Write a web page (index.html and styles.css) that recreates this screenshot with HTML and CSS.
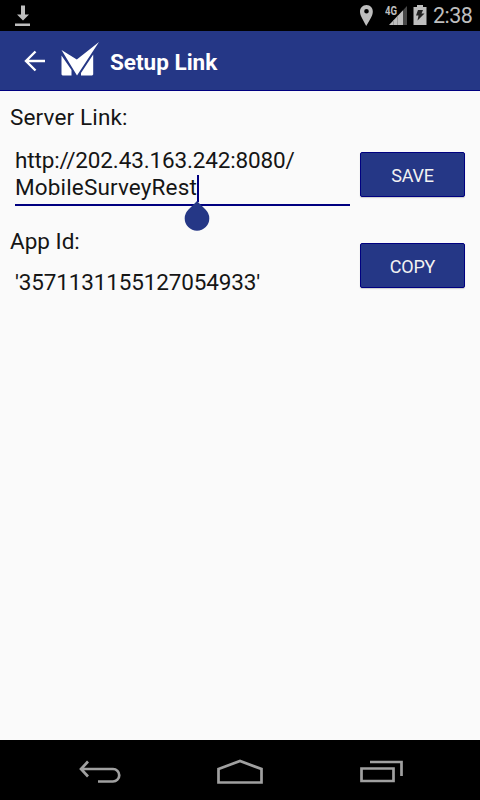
FILE: index.html
```html
<!DOCTYPE html>
<html lang="en">
<head>
  <meta charset="UTF-8">
  <title>Setup Link</title>
  <link rel="stylesheet" href="styles.css">
</head>
<body>
  <div class="status-bar">
    <svg class="download" width="16" height="21" viewBox="0 0 16 21">
      <path fill="#bebebe" d="M6 0.500h4v9h4l-6 6-6-6h4zM0 18.500h15v2.500H0z"/>
    </svg>
    <div class="status-right">
      <svg class="pin" width="14" height="21" viewBox="0 0 14 21">
        <path fill="#bebebe" fill-rule="evenodd" d="M6.500 0C2.500 0 0 3 0 6.700C0 11 3.500 15 6.200 21C9.500 15 12.800 11 12.800 6.700C12.800 3 10.500 0 6.500 0zM6.500 4a2.300 2.300 0 1 1 0 4.600a2.300 2.300 0 0 1 0-4.600z"/>
      </svg>
      <div class="network">
        <span class="network-type">4G</span>
        <svg width="18" height="20" viewBox="0 0 18 20">
          <path fill="#bebebe" d="M0 20L14 5.200V20z"/>
          <path fill="#999" d="M4 15.800l1-1V20H4zM8 11.500l1-1V20H8z"/>
          <path fill="#484848" d="M14 5.200L18 1v19h-4z"/>
        </svg>
      </div>
      <svg class="battery" width="14" height="20" viewBox="0 0 14 20">
        <path fill="#bebebe" d="M4 0h6v2h3.500v18H.5V2H4z"/>
        <path fill="#222" d="M5 5h5l-1.500 3.500h3L4.500 15.500l1-5H3z"/>
      </svg>
      <span class="clock">2:38</span>
    </div>
  </div>

  <header class="toolbar">
    <svg class="back" width="22" height="22" viewBox="0 0 22 22">
      <path fill="none" stroke="#fff" stroke-width="2.400" d="M21 11H2.500M11.500 1.500L2 11l9.500 9.500"/>
    </svg>
    <svg class="logo" width="38" height="34" viewBox="0 0 38 34">
      <path fill="#fff" d="M.5 8L15.800 17.500L38 0L16 33.500zM.5 13.500L10.500 28v5.500H1.500L.5 32.500zM32.200 12.500V32.500l-1 1H20V31z"/>
    </svg>
    <h1 class="title">Setup Link</h1>
  </header>

  <main class="content">
    <label class="label server-label">Server Link:</label>
    <div class="row">
      <div class="field">
        <span class="url">http://202.43.163.242:8080/</span><br>
        <span class="url-end">MobileSurveyRest<span class="cursor"></span></span>
        <svg class="handle" width="26" height="30" viewBox="0 0 26 30">
          <path fill="#253786" d="M13 0L21.500 8.500A12.300 12.300 0 1 1 4.500 8.500z"/>
        </svg>
      </div>
      <button class="btn">SAVE</button>
    </div>
    <div class="row app-row">
      <div class="app">
        <label class="label">App Id:</label>
        <div class="app-id">'3571131155127054933'</div>
      </div>
      <button class="btn">COPY</button>
    </div>
  </main>

  <nav class="nav-bar">
    <svg width="42" height="24" viewBox="0 0 42 24">
      <path fill="none" stroke="#a0a0a0" stroke-width="2.700" d="M2 9H34a6.250 6.250 0 0 1 0 12.500H19M9 1.500L2 9l7 7.500"/>
    </svg>
    <svg class="home" width="46" height="26" viewBox="0 0 46 26">
      <path fill="none" stroke="#a0a0a0" stroke-width="2.700" d="M1.500 10L23 2l21.500 8v13.500h-43z"/>
    </svg>
    <svg width="43" height="23" viewBox="0 0 43 23">
      <path fill="none" stroke="#a0a0a0" stroke-width="2.700" d="M1.500 8.500h32v12.500h-32zM10 2h31.500v14"/>
    </svg>
  </nav>
</body>
</html>
```

FILE: styles.css
```css
body {
  margin: 0;
  height: 800px;
  display: flex;
  flex-direction: column;
  background: #fafafa;
  font-family: Roboto, sans-serif;
  color: #151515;
  overflow: hidden;
}
svg {
  display: block;
  flex: none;
}
.status-bar {
  height: 31px;
  background: #000;
  display: flex;
  justify-content: space-between;
  box-sizing: border-box;
  padding: 5px 7px 0 15px;
}
.status-right {
  display: flex;
}
.network {
  display: flex;
  margin-left: 11px;
}
.network-type {
  font-size: 12px;
  line-height: 12px;
  color: #bebebe;
  font-weight: bold;
  width: 14px;
  margin-right: -10px;
  transform: scaleX(0.8);
  transform-origin: left;
}
.battery {
  margin-left: 6px;
}
.clock {
  color: #bebebe;
  font-size: 21.5px;
  line-height: 22px;
  width: 40px;
  margin-left: 6px;
  letter-spacing: -0.5px;
  white-space: nowrap;
}
.toolbar {
  height: 60px;
  box-sizing: border-box;
  background: #253786;
  border-bottom: 1px solid #000080;
  display: flex;
  align-items: center;
  padding-left: 24px;
}
.logo {
  margin: -3px 0 0 15px;
}
.title {
  margin: 2px 0 0 11px;
  color: #fff;
  font-size: 22.5px;
  line-height: 28px;
  font-weight: bold;
}
.content {
  flex: 1;
  padding: 13px 15px 0 10px;
}
.label {
  display: block;
  font-size: 22.5px;
  line-height: 27px;
}
.server-label {
  letter-spacing: 0.15px;
}
.row {
  display: flex;
  justify-content: space-between;
}
.field {
  position: relative;
  box-sizing: border-box;
  width: 335px;
  height: 59px;
  margin: 16px 0 0 5px;
  border-bottom: 2px solid #000080;
  font-size: 22.5px;
  line-height: 27px;
}
.url {
  letter-spacing: -0.14px;
}
.url-end {
  letter-spacing: 0.15px;
}
.cursor {
  display: inline-block;
  width: 2px;
  height: 27px;
  margin-right: -2px;
  vertical-align: -7px;
  background: #000080;
}
.handle {
  position: absolute;
  left: 169px;
  top: 54px;
}
.btn {
  width: 105px;
  height: 45px;
  margin: 21px 0 0;
  padding: 2px 0 0;
  border: 1px solid #000080;
  border-radius: 2px;
  background: #253786;
  color: #f2f2f2;
  font-family: Roboto, sans-serif;
  font-size: 18px;
  letter-spacing: -0.2px;
  box-shadow: 0 1px 1px #ccc;
}
.app-row {
  padding-top: 22px;
}
.app-row .btn {
  margin-top: 15px;
}
.app-id {
  margin: 14px 0 0 5px;
  font-size: 22.5px;
  line-height: 27px;
  letter-spacing: -0.15px;
}
.nav-bar {
  height: 60px;
  background: #000;
  display: flex;
  justify-content: space-between;
  align-items: center;
  box-sizing: border-box;
  padding: 3px 77px 0 79px;
}
.home {
  margin: 0 1px 0 -1px;
}
```
